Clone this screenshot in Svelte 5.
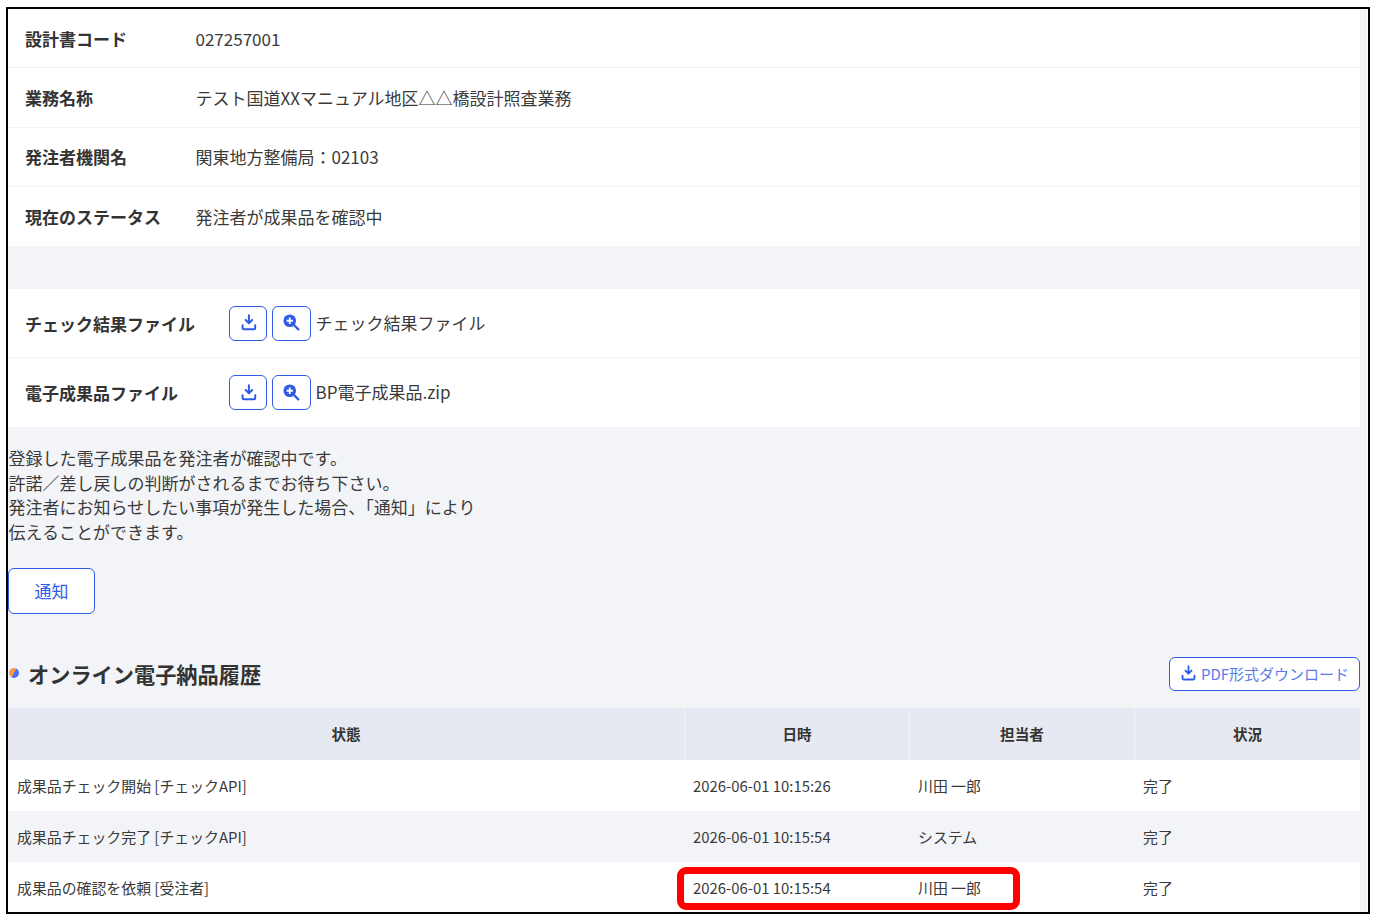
<script>
    const info = [
        { label: "設計書コード", value: "027257001" },
        { label: "業務名称", value: "テスト国道XXマニュアル地区△△橋設計照査業務" },
        { label: "発注者機関名", value: "関東地方整備局：02103" },
        { label: "現在のステータス", value: "発注者が成果品を確認中" }
    ];
    const files = [
        { label: "チェック結果ファイル", name: "チェック結果ファイル" },
        { label: "電子成果品ファイル", name: "BP電子成果品.zip" }
    ];
    const history = [
        { state: "成果品チェック開始 [チェックAPI]", date: "2026-06-01 10:15:26", user: "川田 一郎", status: "完了" },
        { state: "成果品チェック完了 [チェックAPI]", date: "2026-06-01 10:15:54", user: "システム", status: "完了" },
        { state: "成果品の確認を依頼 [受注者]", date: "2026-06-01 10:15:54", user: "川田 一郎", status: "完了" }
    ];
    const downloadPath = "M10 1.5v8.2M6.4 6.6 10 10.2l3.6-3.6M3 12.5v3.2q0 1.3 1.3 1.3h11.4q1.3 0 1.3-1.3v-3.2";
</script>

<div class="shot">
    <div class="frame">
        <div class="content">
            <section class="info">
                {#each info as row}
                    <div class="info-row">
                        <div class="label">{row.label}</div>
                        <div class="value">{row.value}</div>
                    </div>
                {/each}
            </section>

            <section class="files">
                {#each files as file}
                    <div class="file-row">
                        <div class="file-label">{file.label}</div>
                        <button type="button" class="icon-btn first" aria-label="ダウンロード">
                            <svg width="18" height="18" viewBox="-1 0 20 20" fill="none" stroke="#2f5be7" stroke-width="2.2" stroke-linecap="round" stroke-linejoin="round">
                                <path d={downloadPath} />
                            </svg>
                        </button>
                        <button type="button" class="icon-btn" aria-label="拡大">
                            <svg width="18" height="18" viewBox="1 1 20 20">
                                <circle cx="8.5" cy="8.5" r="7" fill="#2f5be7" />
                                <path d="M13.5 13.5 18 18" stroke="#2f5be7" stroke-width="2.6" stroke-linecap="round" />
                                <path d="M8.5 5v7M5 8.5h7" stroke="#fff" stroke-width="2" />
                            </svg>
                        </button>
                        <span class="file-name">{file.name}</span>
                    </div>
                {/each}
            </section>

            <p class="notice">
                登録した電子成果品を発注者が確認中です。<br />
                許諾／差し戻しの判断がされるまでお待ち下さい。<br />
                発注者にお知らせしたい事項が発生した場合、「通知」により<br />
                伝えることができます。
            </p>

            <button type="button" class="notify">通知</button>

            <div class="history-head">
                <h2><span class="dot"></span>オンライン電子納品履歴</h2>
                <button type="button" class="pdf">
                    <svg width="17" height="17" viewBox="0 0 20 20" fill="none" stroke="#2f5be7" stroke-width="2.2" stroke-linecap="round" stroke-linejoin="round">
                        <path d={downloadPath} />
                    </svg>
                    PDF形式ダウンロード
                </button>
            </div>

            <div class="table">
                <div class="tr head">
                    <div>状態</div>
                    <div>日時</div>
                    <div>担当者</div>
                    <div>状況</div>
                </div>
                {#each history as row}
                    <div class="tr">
                        <div>{row.state}</div>
                        <div>{row.date}</div>
                        <div>{row.user}</div>
                        <div>{row.status}</div>
                    </div>
                {/each}
                <div class="highlight"></div>
            </div>
        </div>
    </div>
</div>

<style>
    :global(body) {
        margin: 0;
        background: #fff;
    }

    .shot {
        padding: 7px 0 0 6px;
        width: 1366px;
        font-family: "Noto Sans CJK JP", "Noto Sans", sans-serif;
        color: #3a3a3a;
    }

    .frame {
        box-sizing: border-box;
        width: 1364px;
        height: 907px;
        border: 2px solid #000;
        background: #fff;
        overflow: hidden;
    }

    .content {
        height: 100%;
        width: 1359px;
        background: #f2f4f8;
        padding-right: 7px;
        box-sizing: border-box;
    }

    .info {
        margin-bottom: 43px;
    }

    .info-row {
        display: flex;
        align-items: center;
        height: 59.25px;
        box-sizing: border-box;
        background: #fff;
        border-bottom: 1px solid #f2f4f8;
        padding-left: 17px;
        font-size: 17px;
    }

    .info-row:last-child {
        border-bottom: none;
    }

    .label {
        width: 170.5px;
        font-weight: 700;
        color: #333;
    }

    .files {
        margin-bottom: 19px;
    }

    .file-row {
        display: flex;
        align-items: center;
        height: 69px;
        box-sizing: border-box;
        background: #fff;
        border-bottom: 1px solid #f2f4f8;
        padding-left: 17px;
        font-size: 17px;
    }

    .file-row:last-child {
        border-bottom: none;
    }

    .file-label {
        width: 204px;
        font-weight: 700;
        color: #333;
    }

    .file-name {
        padding-bottom: 2px;
    }

    .icon-btn {
        display: flex;
        align-items: center;
        justify-content: center;
        width: 39px;
        height: 35px;
        padding: 0;
        margin-right: 4.5px;
        border: 1px solid #2f5be7;
        border-radius: 6px;
        background: #fff;
    }

    .icon-btn.first {
        width: 38px;
        margin-right: 5px;
    }

    .notice {
        margin: 0 0 23px 0;
        padding-left: 0.6px;
        font-size: 17px;
        line-height: 24.7px;
    }

    .notify {
        display: block;
        width: 87px;
        height: 46px;
        border: 1px solid #2f5be7;
        border-radius: 6px;
        background: #fff;
        color: #2f5be7;
        font: inherit;
        font-size: 17px;
    }

    .history-head {
        display: flex;
        align-items: center;
        justify-content: space-between;
        height: 34px;
        margin-top: 43px;
        margin-bottom: 17px;
    }

    h2 {
        display: flex;
        align-items: center;
        margin: 0;
        padding-bottom: 1px;
        font-size: 21.2px;
        font-weight: 700;
        color: #333;
    }

    .dot {
        flex: none;
        width: 10px;
        height: 10px;
        margin: 0 9px 0 1px;
        border-radius: 50%;
        background: linear-gradient(115deg, #f59a4e 50%, #4a6ff0 50%);
    }

    .pdf {
        display: flex;
        align-items: center;
        gap: 4px;
        box-sizing: border-box;
        width: 191px;
        height: 34px;
        padding: 0 0 0 10px;
        border: 1px solid #2f5be7;
        border-radius: 6px;
        background: #fff;
        color: #5b7be8;
        font: inherit;
        font-size: 15px;
        white-space: nowrap;
    }

    .table {
        position: relative;
        font-size: 14.9px;
    }

    .tr {
        display: grid;
        grid-template-columns: 676px 225px 225px 226px;
        height: 51px;
        background: #fff;
    }

    .tr > div {
        display: flex;
        align-items: center;
        padding-left: 9px;
    }

    .tr:nth-child(3) {
        background: #f2f4f8;
    }

    .tr.head {
        height: 52px;
        background: #e6e9f1;
        font-size: 14.6px;
        font-weight: 700;
        color: #333;
    }

    .tr.head > div {
        justify-content: center;
        padding-left: 0;
        border-left: 1px solid #f2f4f8;
    }

    .tr.head > div:first-child {
        border-left: none;
    }

    .highlight {
        position: absolute;
        left: 669px;
        top: 159px;
        box-sizing: border-box;
        width: 343px;
        height: 43px;
        border: 7px solid #f00;
        border-radius: 9px;
    }
</style>
